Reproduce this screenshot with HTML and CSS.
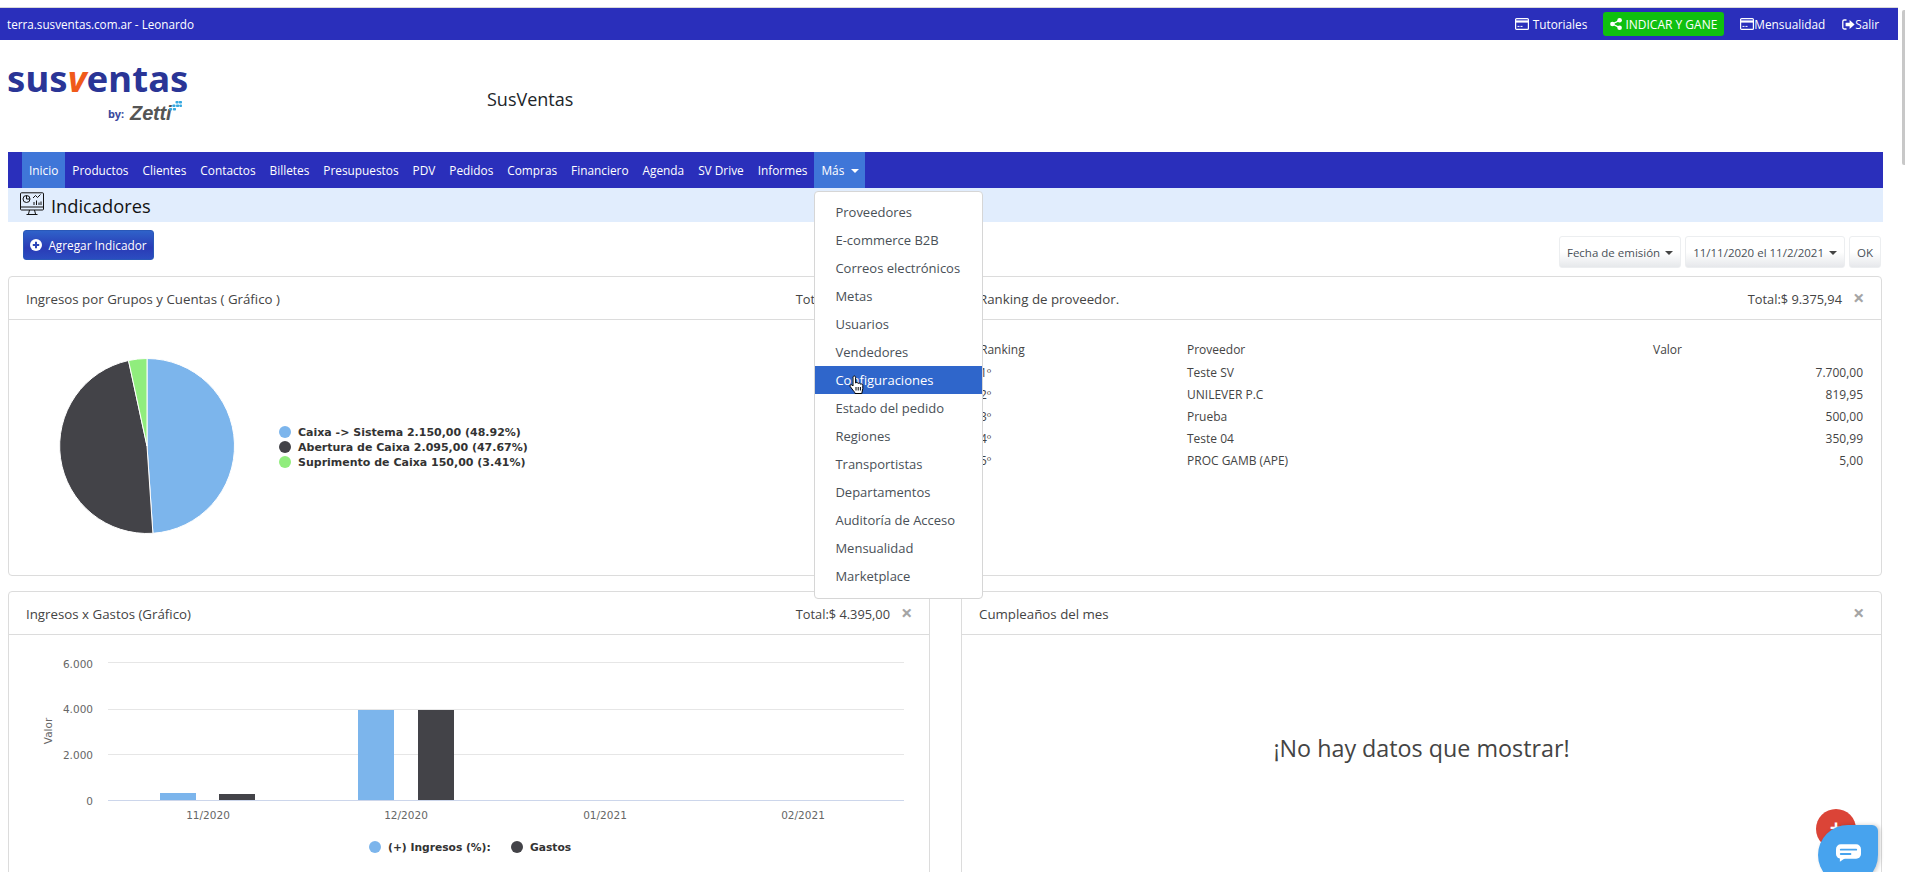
FILE: index.html
```html
<!DOCTYPE html>
<html lang="es">
<head>
<meta charset="utf-8">
<title>SusVentas - Indicadores</title>
<link rel="stylesheet" href="styles.css">
</head>
<body>
<div class="scroll-thumb"></div>
<div class="topbar">
  <span class="site">terra.susventas.com.ar - Leonardo</span>
  <div class="toplinks">
    <a class="toplink tut"><svg class="ic-card" viewBox="0 0 14 12"><rect x=".6" y=".6" width="12.8" height="10.8" rx="1" fill="none" stroke="#fff" stroke-width="1.2"/><rect x="1" y="2.4" width="12" height="2.2" fill="#fff"/><path d="M2.5 8.4h2M5.5 8.4h2" stroke="#fff"/></svg> Tutoriales</a>
    <a class="share"><svg class="ic-share" viewBox="0 0 12 12"><circle cx="2.4" cy="6" r="2.3" fill="#fff"/><circle cx="9.6" cy="2.3" r="2.3" fill="#fff"/><circle cx="9.6" cy="9.7" r="2.3" fill="#fff"/><path d="M2.4 6L9.6 2.3M2.4 6l7.2 3.7" stroke="#fff" stroke-width="1.4"/></svg>INDICAR Y GANE</a>
    <a class="toplink men"><svg class="ic-card" viewBox="0 0 14 12"><rect x=".6" y=".6" width="12.8" height="10.8" rx="1" fill="none" stroke="#fff" stroke-width="1.2"/><rect x="1" y="2.4" width="12" height="2.2" fill="#fff"/><path d="M2.5 8.4h2M5.5 8.4h2" stroke="#fff"/></svg>Mensualidad</a>
    <a class="toplink sal"><svg class="ic-exit" viewBox="0 0 13 11"><path d="M4.5 1H2.2C1.3 1 .8 1.6.8 2.4v6.2c0 .8.5 1.4 1.4 1.4h2.3" fill="none" stroke="#fff" stroke-width="1.3"/><path d="M3.6 3.8h4V1l5 4.5-5 4.5V7.2h-4z" fill="#fff"/></svg>Salir</a>
  </div>
</div>

<header class="brand">
  <div class="logo">
    <div class="logo-main">sus<i>v</i>entas</div>
    <div class="logo-sub"><span class="by">by:</span><span class="zetti">Zetti</span><svg class="dots" viewBox="0 0 10 10"><g fill="#35a8e0"><rect x="5" y="0" width="2.4" height="2" rx=".6"/><rect x="7.6" y="0" width="2.4" height="2" rx=".6"/><rect x="2.6" y="2.6" width="2.4" height="2" rx=".6"/><rect x="5.4" y="2.6" width="2.4" height="2" rx=".6"/><rect x="8" y="2.6" width="2" height="2" rx=".6"/><rect x="0" y="5.4" width="2.4" height="2" rx=".6"/><rect x="3" y="5.4" width="2.4" height="2" rx=".6"/></g></svg></div>
  </div>
  <div class="brand-name">SusVentas</div>
</header>

<nav class="nav">
  <a class="nav-item active">Inicio</a>
  <a class="nav-item">Productos</a>
  <a class="nav-item">Clientes</a>
  <a class="nav-item">Contactos</a>
  <a class="nav-item">Billetes</a>
  <a class="nav-item">Presupuestos</a>
  <a class="nav-item">PDV</a>
  <a class="nav-item">Pedidos</a>
  <a class="nav-item">Compras</a>
  <a class="nav-item">Financiero</a>
  <a class="nav-item">Agenda</a>
  <a class="nav-item">SV Drive</a>
  <a class="nav-item">Informes</a>
  <div class="nav-item active more">Más<span class="caret"></span>
    <ul class="menu">
      <li>Proveedores</li>
      <li>E-commerce B2B</li>
      <li>Correos electrónicos</li>
      <li>Metas</li>
      <li>Usuarios</li>
      <li>Vendedores</li>
      <li class="hover">Configuraciones<svg class="hand" viewBox="0 0 15 20"><path d="M4 2.500C4 1.500 4.700 1 5.300 1S6.600 1.500 6.600 2.500V8C7 7.300 8.800 7.200 9.200 8.500C9.800 7.800 11.300 8 11.500 9.200C12.300 8.600 13.800 9 13.800 10.500V13.500C13.800 15.500 12.800 16.500 12.800 18.500H6C5.800 17 4.800 16.300 3.800 15L1.200 11.500C.5 10.300 2 9 3.200 10.200L4 11z" fill="#fff" stroke="#000" stroke-linejoin="round"/><path d="M7 12v3.500M9.200 12v3.500M11.400 12v3.500" stroke="#000"/></svg></li>
      <li>Estado del pedido</li>
      <li>Regiones</li>
      <li>Transportistas</li>
      <li>Departamentos</li>
      <li>Auditoría de Acceso</li>
      <li>Mensualidad</li>
      <li>Marketplace</li>
    </ul>
  </div>
</nav>

<div class="subhead">
  <svg class="ic-monitor" viewBox="0 0 24 24"><g fill="none" stroke="#111" stroke-width="1"><rect x=".5" y=".8" width="23" height="17.200" rx="1"/><path d="M.5 15h23M9.500 18l-1 4M14.500 18l1 4M6.500 22.500h11"/><circle cx="6.500" cy="7" r="3.500"/><path d="M6.500 3.500V7h3.500M13 6l2.500-2.500 2 2 3-3"/><path d="M14 13v-3M16.500 13V8.500M19 13v-2.500M21 13V9.500"/></g></svg>
  <h1>Indicadores</h1>
</div>

<div class="toolbar">
  <button class="btn-add"><svg class="ic-plus" viewBox="0 0 12 12"><circle cx="6" cy="6" r="6" fill="#fff"/><path d="M6 2.800v6.400M2.800 6h6.400" stroke="#2c45b8" stroke-width="2"/></svg>Agregar Indicador</button>
  <div class="filters">
    <button class="btn-filter">Fecha de emisión<span class="caret dark"></span></button>
    <button class="btn-filter">11/11/2020 el 11/2/2021<span class="caret dark"></span></button>
    <button class="btn-filter">OK</button>
  </div>
</div>

<main class="grid">
  <section class="card tall">
    <div class="card-head"><span class="card-title">Ingresos por Grupos y Cuentas ( Gráfico )</span><span class="card-total">Total:$ 4.395,00</span><span class="close">×</span></div>
    <div class="card-body">
      <svg class="pie" viewBox="0 0 920 254">
        <path d="M138 38.500A87.500 87.500 0 0 1 143.900 213.300L138 126z" fill="#7cb5ec" stroke="#fff"/>
        <path d="M143.900 213.300A87.500 87.500 0 0 1 119.500 40.500L138 126z" fill="#434348" stroke="#fff"/>
        <path d="M119.500 40.500A87.500 87.500 0 0 1 138 38.500V126z" fill="#90ed7d" stroke="#fff"/>
        <circle cx="276" cy="112" r="6" fill="#7cb5ec"/>
        <circle cx="276" cy="127" r="6" fill="#434348"/>
        <circle cx="276" cy="142" r="6" fill="#90ed7d"/>
        <text class="pie-legend" x="289" y="116">Caixa -&gt; Sistema 2.150,00 (48.92%)</text>
        <text class="pie-legend" x="289" y="131">Abertura de Caixa 2.095,00 (47.67%)</text>
        <text class="pie-legend" x="289" y="146">Suprimento de Caixa 150,00 (3.41%)</text>
      </svg>
    </div>
  </section>

  <section class="card tall">
    <div class="card-head"><span class="card-title">Ranking de proveedor.</span><span class="card-total">Total:$ 9.375,94</span><span class="close">×</span></div>
    <div class="card-body rank-body">
      <table class="rank">
        <thead><tr><th class="c1">Ranking</th><th class="c2">Proveedor</th><th>Valor</th></tr></thead>
        <tbody>
          <tr><td>1º</td><td>Teste SV</td><td class="num">7.700,00</td></tr>
          <tr><td>2º</td><td>UNILEVER P.C</td><td class="num">819,95</td></tr>
          <tr><td>3º</td><td>Prueba</td><td class="num">500,00</td></tr>
          <tr><td>4º</td><td>Teste 04</td><td class="num">350,99</td></tr>
          <tr><td>5º</td><td>PROC GAMB (APE)</td><td class="num">5,00</td></tr>
        </tbody>
      </table>
    </div>
  </section>

  <section class="card">
    <div class="card-head"><span class="card-title">Ingresos x Gastos (Gráfico)</span><span class="card-total">Total:$ 4.395,00</span><span class="close">×</span></div>
    <div class="card-body">
      <svg class="bars" viewBox="0 0 920 260">
        <g stroke="#e6e6e6"><path d="M99 28.500H895M99 75.500H895M99 120.500H895"/></g>
        <path d="M99 166.500H895" stroke="#ccd6eb"/>
        <g class="axis">
          <text x="84" y="34" text-anchor="end">6.000</text>
          <text x="84" y="79" text-anchor="end">4.000</text>
          <text x="84" y="125" text-anchor="end">2.000</text>
          <text x="84" y="171" text-anchor="end">0</text>
          <text x="199" y="185" text-anchor="middle">11/2020</text>
          <text x="397" y="185" text-anchor="middle">12/2020</text>
          <text x="596" y="185" text-anchor="middle">01/2021</text>
          <text x="794" y="185" text-anchor="middle">02/2021</text>
          <text transform="translate(43 97) rotate(-90)" text-anchor="middle">Valor</text>
        </g>
        <rect x="151" y="159" width="36" height="7" fill="#7cb5ec"/>
        <rect x="210" y="160" width="36" height="6" fill="#434348"/>
        <rect x="349" y="76" width="36" height="90" fill="#7cb5ec"/>
        <rect x="409" y="76" width="36" height="90" fill="#434348"/>
        <circle cx="366" cy="213" r="6" fill="#7cb5ec"/>
        <text class="bar-legend" x="379" y="217">(+) Ingresos (%):</text>
        <circle cx="508" cy="213" r="6" fill="#434348"/>
        <text class="bar-legend" x="521" y="217">Gastos</text>
      </svg>
    </div>
  </section>

  <section class="card">
    <div class="card-head"><span class="card-title">Cumpleaños del mes</span><span class="card-spacer"></span><span class="close">×</span></div>
    <div class="card-body empty">¡No hay datos que mostrar!</div>
  </section>
</main>

<div class="fab-red"><span class="fab-plus">+</span></div>
<div class="fab-chat"><svg class="ic-chat" viewBox="0 0 26 18"><rect width="26" height="15" rx="5" fill="#fff"/><path d="M4 13v5l6-4z" fill="#fff"/><path d="M5 5.500h16M5 10h10" stroke="#47a3ee" stroke-width="2" stroke-linecap="round"/></svg></div>
</body>
</html>
```
FILE: styles.css
```css
* { box-sizing: border-box; }
html, body { height: 872px; overflow: hidden; }
body {
  margin: 0;
  background: #fff;
  color: #212529;
  font-family: "Open Sans", "Noto Sans", sans-serif;
  font-size: 12px;
}
.scroll-thumb {
  position: absolute; right: 0; top: 10px; width: 3px; height: 155px;
  background: #c8c8c8; border-radius: 2px 0 0 2px;
}
.topbar {
  margin: 7px 7px 0 0; height: 33px;
  border-top: 1px solid #d8d8d8;
  background: #2a2fbb; color: #fff;
  display: flex; align-items: center; justify-content: space-between;
  padding: 0 19px 0 7px;
}
.site { font-size: 11.700px; }
.toplinks { display: flex; align-items: center; }
.toplink { display: flex; align-items: center; font-size: 11.800px; white-space: nowrap; }
.tut .ic-card { margin-right: 4px; }
.men { margin-left: 16px; }
.sal { margin-left: 17px; }
.ic-card { width: 14px; height: 12px; }
.ic-exit { width: 13px; height: 11px; }
.ic-share { width: 12px; height: 12px; margin-right: 3px; }
.share {
  margin-left: 16px; height: 24px; width: 121px;
  background: #0fc00f; color: #fff; border-radius: 3px;
  display: flex; align-items: center; justify-content: center;
  font-size: 12px; white-space: nowrap;
}

.brand { height: 112px; display: flex; align-items: flex-start; padding-left: 7px; }
.logo { width: 480px; padding-top: 20px; }
.logo-main {
  color: #2a3596; font-family: "Noto Sans", sans-serif; font-weight: 700;
  font-size: 36.500px; line-height: 36px; letter-spacing: .1px;
}
.logo-main i { color: #f05a1a; font-style: italic; }
.logo-sub { display: flex; align-items: center; margin: 5px 0 0 101px; height: 24px; }
.by { color: #3b4a9e; font-weight: 700; font-size: 11px; margin-right: 6px; font-family: "Noto Sans", sans-serif; }
.zetti { color: #555; font-family: "Liberation Sans", sans-serif; font-weight: 700; font-style: italic; font-size: 20px; letter-spacing: -.2px; }
.dots { width: 13px; height: 13px; margin: -12px 0 0 -2px; }
.brand-name { font-size: 18px; margin-top: 47px; line-height: 24px; color: #212529; }

.nav {
  margin: 0 22px 0 8px; height: 36px; padding-left: 14px;
  background: #2a2fbb; display: flex;
  position: relative; z-index: 5;
}
.nav-item {
  padding: 0 7px; line-height: 37px; color: #fff; font-size: 11.840px; white-space: nowrap;
}
.nav-item.active { background: #3f76d8; }
.more { position: relative; width: 51px; }
.caret {
  display: inline-block; margin-left: 7px; vertical-align: 2px;
  border-top: 4px solid #fff; border-left: 4px solid transparent; border-right: 4px solid transparent;
}
.caret.dark { border-top-color: #444; margin-left: 5px; }
.menu {
  position: absolute; top: 39px; left: 0; width: 169px; height: 408px;
  margin: 0; padding: 6px 0; list-style: none;
  background: #fff; border: 1px solid #d6d6d6; border-radius: 4px;
  color: #495057; line-height: 28px;
}
.menu li {
  height: 28px; padding-left: 20px; font-size: 13px; position: relative;
}
.menu li.hover { background: #2f66cb; color: #fff; }
.hand { position: absolute; left: 34px; top: 9px; width: 15px; height: 20px; }

.subhead {
  margin: 0 22px 0 8px; height: 34px; background: #e1edfd;
  display: flex; align-items: center; padding-left: 12px;
}
.ic-monitor { width: 24px; height: 24px; margin-right: 7px; margin-top: -3px; }
.subhead h1 { margin: 0; font-size: 18.300px; font-weight: 400; line-height: 34px; padding-top: 2px; color: #111; }

.toolbar {
  height: 54px; padding: 8px 24px 0 23px;
  display: flex; justify-content: space-between; align-items: flex-start;
}
.btn-add {
  height: 30px; width: 131px; padding: 0; border: 1px solid #2a58b8; border-radius: 3px;
  background: linear-gradient(#2f62c9, #2a3bb6 60%, #2b4cc0);
  color: #fff; font: 11.800px "Open Sans", sans-serif;
  display: flex; align-items: center; justify-content: center;
}
.ic-plus { width: 12px; height: 12px; margin-right: 6px; }
.filters { display: flex; gap: 4px; margin-top: 6px; }
.btn-filter {
  height: 32px; padding: 0 7px; border: 1px solid #eceef0; border-radius: 3px;
  background: linear-gradient(#fff 50%, #e6e8eb);
  color: #495057; font: 11.500px "Open Sans", sans-serif; white-space: nowrap;
}

.grid {
  margin: 0 23px 0 8px;
  display: grid; grid-template-columns: 922px 921px; column-gap: 31px; row-gap: 15px;
  grid-auto-rows: min-content;
}
.card {
  border: 1px solid #dcdcdc; border-radius: 4px; background: #fff; height: 420px;
}
.card.tall { height: 300px; }
.card-head {
  height: 43px; border-bottom: 1px solid #dcdcdc; padding: 2px 17px 0;
  display: flex; align-items: center; color: #444;
}
.card-title { flex: 1; font-size: 13.300px; }
.card-total { font-size: 12.800px; }
.card-spacer { width: 0; }
.close { width: 11px; margin-left: 11px; font-size: 20px; font-weight: 700; color: #a5a5a5; line-height: 1; margin-top: -3px; }
.pie { display: block; width: 920px; height: 254px; }
.pie-legend { font: 700 11px "DejaVu Sans", sans-serif; fill: #333; }
.rank-body { padding: 18px 18px 0 18px; }
.rank { width: 100%; border-collapse: collapse; font-size: 12px; color: #444; }
.rank th { font-weight: 400; text-align: left; height: 23px; padding: 0; }
.rank td { height: 22px; padding: 0; }
.rank .c1 { width: 207px; }
.rank .c2 { width: 466px; }
.rank .num { text-align: right; }
.bars { display: block; width: 920px; height: 260px; margin-top: -1px; }
.axis text { font: 10.500px "DejaVu Sans", sans-serif; fill: #666; }
.bar-legend { font: 700 10.700px "DejaVu Sans", sans-serif; fill: #333; }
.empty { text-align: center; font-size: 23.300px; color: #444; padding-top: 97px; }

.fab-red {
  position: absolute; left: 1816px; top: 809px; width: 40px; height: 40px;
  border-radius: 50%; background: #db4437; color: #fff; text-align: center;
}
.fab-plus { font-size: 22px; line-height: 34px; font-weight: 700; }
.fab-chat {
  position: absolute; left: 1818px; top: 825px; width: 60px; height: 60px;
  border-radius: 50% 6px 50% 50%; background: #47a3ee;
  box-shadow: 2px 0 4px rgba(0,0,0,.2);
  display: flex; align-items: center; justify-content: center;
}
.ic-chat { width: 25px; height: 18px; margin-top: -4px; }
```
